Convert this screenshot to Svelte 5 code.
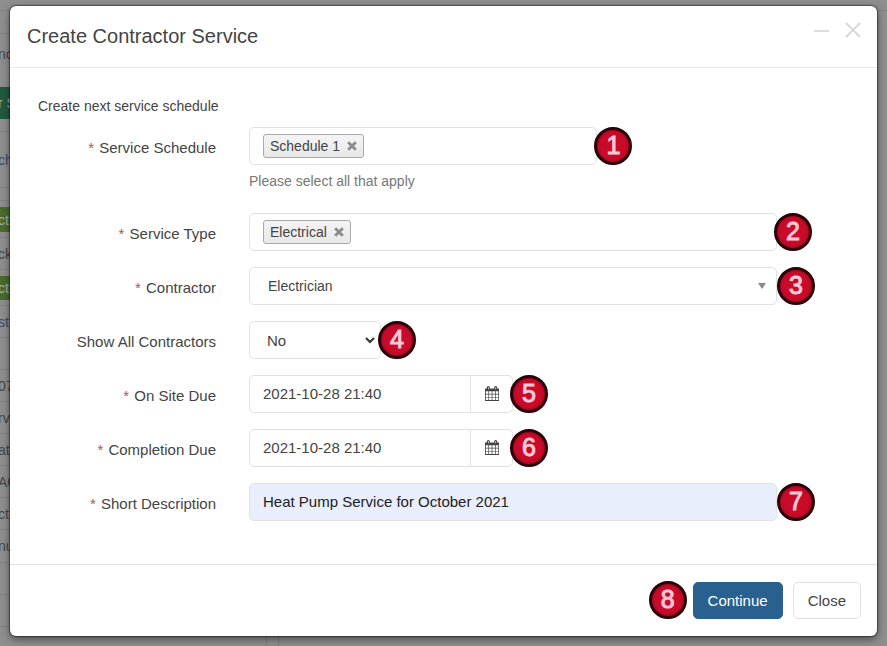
<script>
 let schedules = ['Schedule 1']
 let types = ['Electrical']
 let contractor = 'Electrician'
 let showAll = 'No'
 let onSite = '2021-10-28 21:40'
 let completion = '2021-10-28 21:40'
 let description = 'Heat Pump Service for October 2021'

 // rows of the page that stays visible behind the dialog
 const behind = [
     {height: 11, wide: true},
     {height: 23},
     {height: 40, text: 'no', plain: true},
     {height: 13, plain: true},
     {height: 32, text: 'r S', tone: 'green'},
     {height: 13},
     {height: 56, text: 'ch', tone: 'link'},
     {height: 13},
     {height: 6, plain: true},
     {height: 25, text: 'cti', tone: 'olive'},
     {height: 6},
     {height: 32, text: 'ck'},
     {height: 6, plain: true},
     {height: 24, text: 'cti', tone: 'olive'},
     {height: 6},
     {height: 32, text: 'st', tone: 'link'},
     {height: 32},
     {height: 32, text: '07'},
     {height: 32, text: 'rv'},
     {height: 32, text: 'at'},
     {height: 32, text: 'AC'},
     {height: 32, text: 'ct'},
     {height: 33, text: 'nu'},
     {height: 32},
     {height: 32}
 ]

 function removeSchedule (item) {
     schedules = schedules.filter(s => s !== item)
 }

 function removeType (item) {
     types = types.filter(t => t !== item)
 }
</script>

{#snippet cross()}
<svg viewBox="0 0 10 10" width="10" height="10" aria-hidden="true">
    <path d="M1.2 1.2 L8.8 8.8 M8.8 1.2 L1.2 8.8" stroke="#8a8a8a" stroke-width="2.8" />
</svg>
{/snippet}

{#snippet calendar()}
<svg viewBox="0 0 14 15" width="14" height="15" aria-hidden="true">
    <path d="M0 2.5 H14 V15 H0 Z" fill="#444" />
    <path d="M1.8 1 Q3.3 -0.8 4.8 1 V4 H1.8 Z M9.2 1 Q10.7 -0.8 12.2 1 V4 H9.2 Z" fill="#444" />
    <path d="M3 1.2 H3.7 V3.2 H3 Z M10.4 1.2 H11.1 V3.2 H10.4 Z" fill="#fff" />
    <path d="M0.8 5.2 h2.6 v2.5 h-2.6 z M4.1 5.2 h2.6 v2.5 h-2.6 z M7.4 5.2 h2.6 v2.5 h-2.6 z M10.7 5.2 h2.6 v2.5 h-2.6 z M0.8 8.4 h2.6 v2.5 h-2.6 z M4.1 8.4 h2.6 v2.5 h-2.6 z M7.4 8.4 h2.6 v2.5 h-2.6 z M10.7 8.4 h2.6 v2.5 h-2.6 z M0.8 11.6 h2.6 v2.5 h-2.6 z M4.1 11.6 h2.6 v2.5 h-2.6 z M7.4 11.6 h2.6 v2.5 h-2.6 z M10.7 11.6 h2.6 v2.5 h-2.6 z" fill="#fff" />
</svg>
{/snippet}

<div class="page">
    <div class="behind" aria-hidden="true">
        {#each behind as row}
        <div class="strip {row.tone || ''}" class:plain={row.plain} class:wide={row.wide} style="height: {row.height}px">{row.text || ''}</div>
        {/each}
        <div class="columns"><span></span><span></span></div>
    </div>

    <div class="dialog" role="dialog" aria-labelledby="title">
        <header>
            <h1 id="title">Create Contractor Service</h1>
            <button class="tool" aria-label="Minimise">
                <svg viewBox="0 0 16 16" width="16" height="16"><path d="M0 9 H15" stroke="#ddd" stroke-width="2" /></svg>
            </button>
            <button class="tool" aria-label="Close dialog">
                <svg viewBox="0 0 16 16" width="16" height="16"><path d="M1 1 L15 15 M15 1 L1 15" stroke="#d8d8d8" stroke-width="2" /></svg>
            </button>
        </header>

        <form id="service" on:submit|preventDefault>
            <p class="intro">Create next service schedule</p>

            <div class="row">
                <label for="schedule"><i>*</i> Service Schedule</label>
                <div class="field">
                    <div class="box multi medium">
                        {#each schedules as item}
                        <span class="chip">{item}
                            <button type="button" aria-label="Remove {item}" on:click={() => removeSchedule(item)}>{@render cross()}</button>
                        </span>
                        {/each}
                        <input id="schedule" type="text">
                    </div>
                    <span class="badge">1</span>
                </div>
                <p class="help">Please select all that apply</p>
            </div>

            <div class="row">
                <label for="type"><i>*</i> Service Type</label>
                <div class="field">
                    <div class="box multi">
                        {#each types as item}
                        <span class="chip">{item}
                            <button type="button" aria-label="Remove {item}" on:click={() => removeType(item)}>{@render cross()}</button>
                        </span>
                        {/each}
                        <input id="type" type="text">
                    </div>
                    <span class="badge">2</span>
                </div>
            </div>

            <div class="row">
                <label for="contractor"><i>*</i> Contractor</label>
                <div class="field">
                    <div class="box pick">
                        <select id="contractor" class="combo" bind:value={contractor}>
                            <option>Electrician</option>
                        </select>
                        <svg class="arrow" viewBox="0 0 8 6" width="8" height="6"><path d="M0 0 H8 L4 6 Z" fill="#888" /></svg>
                    </div>
                    <span class="badge clear">3</span>
                </div>
            </div>

            <div class="row">
                <label for="all">Show All Contractors</label>
                <div class="field">
                    <div class="box pick small">
                        <select id="all" bind:value={showAll}>
                            <option>No</option>
                            <option>Yes</option>
                        </select>
                        <svg class="arrow" viewBox="0 0 10 7" width="10" height="7"><path d="M1 1 L5 5 L9 1" fill="none" stroke="#333" stroke-width="2" /></svg>
                    </div>
                    <span class="badge">4</span>
                </div>
            </div>

            <div class="row">
                <label for="onsite"><i>*</i> On Site Due</label>
                <div class="field">
                    <div class="box half">
                        <input id="onsite" type="text" bind:value={onSite}>
                        <button type="button" class="date" aria-label="Pick on site date">{@render calendar()}</button>
                    </div>
                    <span class="badge">5</span>
                </div>
            </div>

            <div class="row">
                <label for="completion"><i>*</i> Completion Due</label>
                <div class="field">
                    <div class="box half">
                        <input id="completion" type="text" bind:value={completion}>
                        <button type="button" class="date" aria-label="Pick completion date">{@render calendar()}</button>
                    </div>
                    <span class="badge">6</span>
                </div>
            </div>

            <div class="row">
                <label for="description"><i>*</i> Short Description</label>
                <div class="field">
                    <div class="box filled">
                        <input id="description" type="text" bind:value={description}>
                    </div>
                    <span class="badge clear">7</span>
                </div>
            </div>
        </form>

        <footer>
            <span class="badge clear">8</span>
            <button class="btn primary" form="service">Continue</button>
            <button class="btn">Close</button>
        </footer>
    </div>
</div>

<style>
 :global(body) {
     background: #8f8f8f;
 }

 .page {
     position: relative;
     box-sizing: border-box;
     min-height: 100vh;
     padding: 6px 10px 10px;
     overflow: hidden;
     font-family: "Liberation Sans", Arial, sans-serif;
     font-size: 15px;
     color: #444;
 }

 .page * {
     box-sizing: border-box;
 }

 .behind {
     position: absolute;
     inset: 0;
     overflow: hidden;
     display: flex;
     flex-direction: column;
     font-size: 14px;
     color: #454545;
 }

 .strip {
     flex: none;
     display: flex;
     align-items: center;
     width: 50%;
     border-bottom: 1px solid #828282;
     text-indent: -2px;
     white-space: nowrap;
 }

 .wide {
     width: 100%;
 }

 .plain {
     border-color: transparent;
 }

 .link {
     color: #3f4668;
 }

 .green, .olive {
     border: 0;
     color: #9db5a6;
     background: #215a41;
 }

 .olive {
     background: #4b6b2f;
 }

 .columns {
     flex: 1;
     display: flex;
     gap: 11px;
     padding-left: 266px;
 }

 .columns span {
     border-left: 1px solid #7f7f7f;
 }

 .dialog {
     position: relative;
     background: #fff;
     border-radius: 6px;
     box-shadow: 0 0 1px 1px rgba(0, 0, 0, .4), 0 3px 9px rgba(0, 0, 0, .5);
 }

 header {
     display: flex;
     align-items: flex-start;
     gap: 15px;
     padding: 16px 16px 17px 17px;
     border-bottom: 1px solid #e8e8e8;
 }

 h1 {
     flex: 1;
     margin: 0;
     font-size: 20px;
     line-height: 28px;
     font-weight: normal;
 }

 button {
     font-family: inherit;
     cursor: pointer;
 }

 .tool {
     display: flex;
     padding: 0;
     border: 0;
     background: none;
 }

 form {
     padding: 28px 100px 43px 28px;
 }

 p {
     margin: 0;
     font-size: 14px;
     line-height: 20px;
 }

 .intro {
     margin-bottom: 11px;
 }

 .row {
     display: grid;
     grid-template-columns: 178px minmax(0, 1fr);
     column-gap: 33px;
     margin-bottom: 16px;
 }

 .row:last-child {
     margin-bottom: 0;
 }

 label {
     padding-top: 11px;
     line-height: 20px;
     text-align: right;
 }

 i {
     margin-right: 1px;
     font-style: normal;
     color: #a55;
 }

 .help {
     grid-column: 2;
     padding: 6px 0;
     color: #777;
 }

 .field {
     display: flex;
     align-items: center;
 }

 .box {
     display: flex;
     flex: none;
     width: 100%;
     height: 38px;
     border: 1px solid #e2e2e2;
     border-radius: 5px;
     background: #fff;
 }

 .medium {
     width: 66%;
 }

 .half {
     width: 50%;
 }

 .small {
     width: 25%;
 }

 input, select {
     flex: 1;
     min-width: 0;
     padding: 0 13px 2px;
     border: 0;
     outline: 0;
     background: none;
     font: inherit;
     color: inherit;
 }

 .multi {
     align-items: center;
     gap: 6px;
     padding-left: 13px;
 }

 .chip {
     display: flex;
     align-items: center;
     gap: 7px;
     height: 24px;
     padding: 0 6px;
     border: 1px solid #aaa;
     border-radius: 3px;
     background: linear-gradient(#f4f4f4, #e8e8e8);
     font-size: 14px;
     white-space: nowrap;
 }

 .chip button {
     display: flex;
     padding: 0;
     border: 0;
     background: none;
 }

 .pick {
     display: grid;
     align-items: center;
 }

 .pick select {
     grid-area: 1 / 1;
     height: 100%;
     padding: 0 17px;
     appearance: none;
 }

 .pick .combo {
     padding: 0 18px;
     font-size: 14px;
 }

 .arrow {
     grid-area: 1 / 1;
     justify-self: end;
     margin-right: 10px;
     pointer-events: none;
 }

 .small .arrow {
     margin-right: 5px;
 }

 .date {
     display: flex;
     align-items: center;
     justify-content: center;
     width: 42px;
     padding: 0 0 2px;
     border: 0;
     border-left: 1px solid #e2e2e2;
     background: none;
 }

 .filled {
     background: #e8eefc;
     color: #222;
 }

 .badge {
     z-index: 1;
     flex: none;
     width: 38px;
     height: 38px;
     margin-left: -3px;
     border: 3px solid #2c0008;
     border-radius: 50%;
     background: #c90b2a;
     box-shadow: inset 0 0 3px #70041a;
     color: #ffc8d6;
     font-size: 25px;
     line-height: 30px;
     text-align: center;
     -webkit-text-stroke: 1px #ffc8d6;
 }

 .clear {
     margin-left: 0;
 }

 footer {
     display: flex;
     align-items: center;
     justify-content: flex-end;
     padding: 16px 16px 17px;
     border-top: 1px solid #e2e2e2;
 }

 .btn {
     height: 37px;
     margin-left: 10px;
     padding: 0 14px;
     border: 1px solid #e2e2e2;
     border-radius: 5px;
     background: #fff;
     color: #444;
     font-size: 15px;
 }

 .primary {
     margin-left: 6px;
     border-color: #2a6090;
     background: #2a6090;
     color: #fff;
 }
</style>
